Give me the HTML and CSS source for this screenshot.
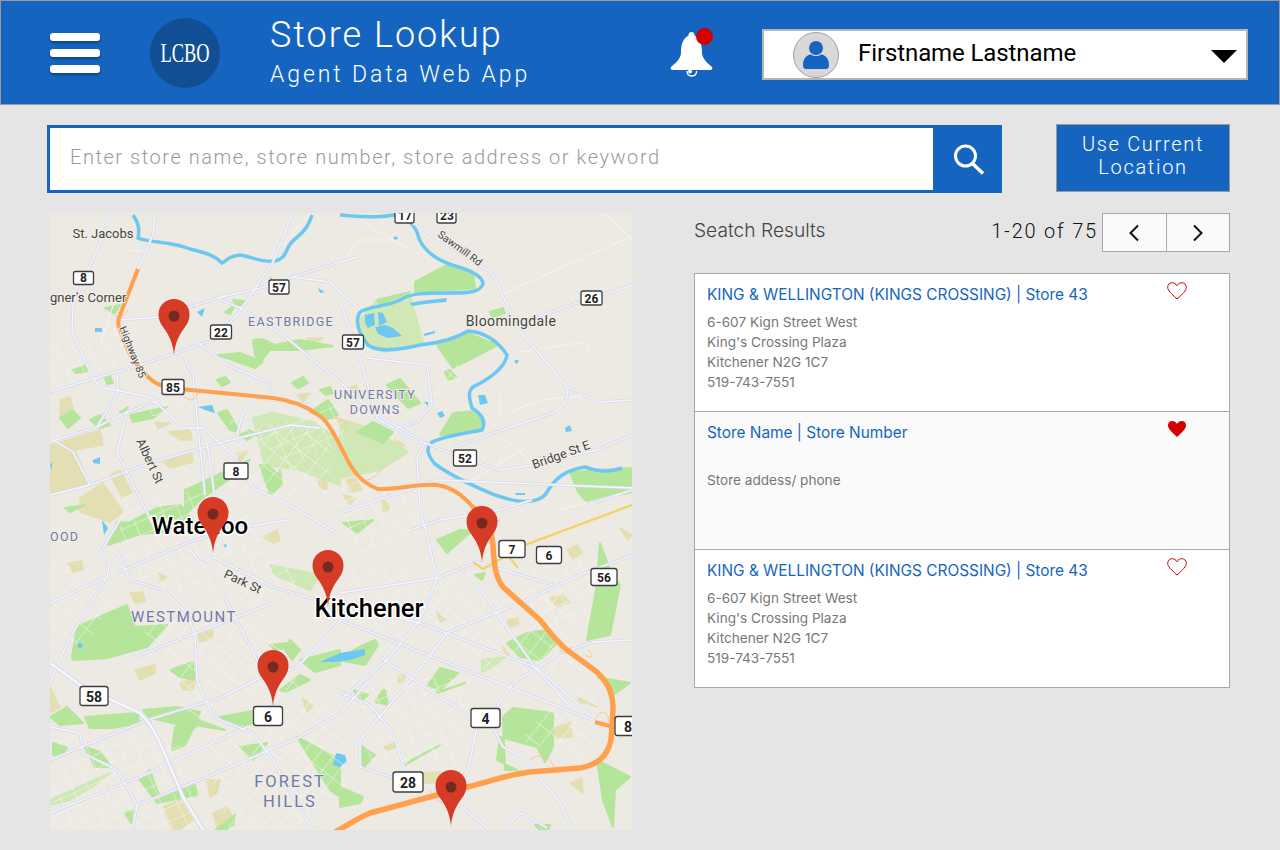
FILE: index.html
```html
<!DOCTYPE html>
<html lang="en">
<head>
    <meta charset="UTF-8">
    <meta name="viewport" content="width=device-width, initial-scale=1.0">
    <title>Store Lookup</title>
    <link rel="stylesheet" href="styles.css">
</head>
<body>
    <header class="app-header">
        <div class="hamburger">
            <span></span>
            <span></span>
            <span></span>
        </div>
        <svg class="logo" width="70" height="70" viewBox="0 0 70 70">
            <circle cx="35" cy="35" r="35" fill="#114f95"/>
            <text class="logo-text" x="35" y="44" text-anchor="middle" textLength="49" lengthAdjust="spacingAndGlyphs">LCBO</text>
        </svg>
        <div class="app-title">
            <h1>Store Lookup</h1>
            <p>Agent Data Web App</p>
        </div>
        <div class="bell">
            <svg width="44" height="52" viewBox="0 0 44 52">
                <path d="M21.500 6c-2 0-3 1.500-3 3.500C13 12 11 19 11 26c0 6-4 10-9.500 14.500-1.500 1.500-1 3.500 1.500 3.500h37c2.500 0 3-2 1.500-3.500C36 36 32 32 32 26c0-7-2-14-7.500-16.500C24.500 7.500 23.500 6 21.500 6z" fill="#fff"/>
                <path d="M17 45c0 3 2 5 4.800 5s4.800-2 4.800-5" fill="none" stroke="#fff" stroke-width="1.400"/>
                <circle cx="20" cy="45.500" r="2" fill="#fff"/>
            </svg>
            <span class="bell-dot"></span>
        </div>
        <div class="user-box">
            <div class="avatar">
                <svg width="28" height="30" viewBox="0 0 28 30">
                    <circle cx="14" cy="8" r="7" fill="#1565c0"/>
                    <path d="M1 25c0-7 4-10 8-10.500 3 2 7 2 10 0 4 .5 8 3.500 8 10.500 0 2.500-1 4-3 4H4c-2 0-3-1.500-3-4z" fill="#1565c0"/>
                </svg>
            </div>
            <span class="user-name">Firstname Lastname</span>
            <span class="caret"></span>
        </div>
    </header>

    <main class="page">
        <div class="search-row">
            <div class="search-box">
                <input type="text" class="search-input" placeholder="Enter store name, store number, store address or keyword">
                <button class="search-btn">
                    <svg width="32" height="31" viewBox="0 0 32 31">
                        <circle cx="12.500" cy="12" r="10" fill="none" stroke="#fff" stroke-width="3"/>
                        <path d="M19.500 19.500l10.500 10" stroke="#fff" stroke-width="3.500" fill="none"/>
                    </svg>
                </button>
            </div>
            <button class="location-btn">Use Current Location</button>
        </div>

        <div class="content-row">
            <div class="map">
                <svg width="582" height="617" viewBox="50 213 582 617">
                    <defs>
                        <pattern id="streets" width="15" height="13" patternUnits="userSpaceOnUse" patternTransform="rotate(-24)">
                            <path d="M0 0H15M0 0V13" stroke="#f8f6f2" stroke-width="1" fill="none"/>
                        </pattern>
                        <pattern id="streets2" width="13" height="17" patternUnits="userSpaceOnUse" patternTransform="rotate(38)">
                            <path d="M0 0H13M0 0V17" stroke="#f8f6f2" stroke-width="1" fill="none"/>
                        </pattern>
                        <g id="pin">
                            <path d="M0 0C-1-12-5-20-11-28-14-32-15.500-36-15.500-40.500A15.500 15.500 0 0 1 15.500-40.500C15.500-36 14-32 11-28 5-20 1-12 0 0z" fill="#d63b25"/>
                            <circle cx="0" cy="-39" r="5.500" fill="#76291f"/>
                        </g>
                        <g id="roads">
                            <path d="M154 215C156 235 148 245 138 269"/>
                            <path d="M118 320L160 317 217 298 273 285 293 277 340 262 358 257"/>
                            <path d="M50 392L130 368 173 354 213 340 237 315 273 262 292 215"/>
                            <path d="M183 355L193 375 197 418 205 495"/>
                            <path d="M207 443L215 498"/>
                            <path d="M217 298L240 308 283 335 340 382 373 412 423 442 450 453 500 470 533 465 597 450 632 435"/>
                            <path d="M410 221L490 272 497 282 517 328 563 382C570 392 570 403 553 413L453 447"/>
                            <path d="M567 387L600 402 632 400"/>
                            <path d="M513 325L580 302 632 285"/>
                            <path d="M425 443L417 458 420 505 423 520 437 578 420 620 387 660 340 700"/>
                            <path d="M420 443L377 418 360 358 340 302"/>
                            <path d="M427 365L432 405 417 422 397 428"/>
                            <path d="M367 358L427 365"/>
                            <path d="M50 495L90 485 150 463 223 442 290 425 320 428"/>
                            <path d="M50 438L73 452 90 485"/>
                            <path d="M73 305L72 332 93 378 100 387 150 397 183 428 203 428 233 455 253 488 280 500 340 535"/>
                            <path d="M127 412L117 452 140 498 153 525"/>
                            <path d="M50 442L97 427 127 412 160 400"/>
                            <path d="M117 375L118 392 97 427"/>
                            <path d="M112 215L73 305"/>
                            <path d="M195 340L227 365 267 382 273 392"/>
                            <path d="M293 277L330 282 360 310"/>
                            <path d="M243 412L257 398 310 405"/>
                            <path d="M237 435L243 412"/>
                            <path d="M50 603L107 577 110 563 100 553 120 520"/>
                            <path d="M117 552L130 580 163 590 187 613 195 635 197 680 213 717 253 733 273 760 293 797 313 830"/>
                            <path d="M50 683L70 637 107 577"/>
                            <path d="M50 760L147 720 220 698 260 678 297 667 333 630 340 620"/>
                            <path d="M50 813L140 777 247 727"/>
                            <path d="M137 805L207 777 300 737 340 713 370 680"/>
                            <path d="M50 727L80 733 83 753 117 770 137 805 133 830"/>
                            <path d="M135 657L273 603"/>
                            <path d="M203 563L213 557 273 587 317 600 340 620 473 673 593 720"/>
                            <path d="M345 605L420 623 537 668 590 715"/>
                            <path d="M225 598L257 660 270 680"/>
                            <path d="M117 573L187 543 227 530 287 520"/>
                            <path d="M190 550L203 565"/>
                            <path d="M340 593L437 578 477 562 553 585"/>
                            <path d="M527 600L447 633 413 677 360 740"/>
                            <path d="M477 585L537 670 573 710"/>
                            <path d="M380 657L470 717"/>
                            <path d="M497 707L513 683 560 653 593 642 632 640"/>
                            <path d="M477 727L468 770 458 783"/>
                            <path d="M493 728L503 747 523 757 560 803 573 830"/>
                            <path d="M360 740L360 767 393 778"/>
                            <path d="M340 692L370 705 393 733 407 777"/>
                            <path d="M457 803L487 828"/>
                            <path d="M503 828L522 813 547 828"/>
                            <path d="M527 600L580 575 632 555"/>
                            <path d="M340 513L437 480 632 488"/>
                            <path d="M587 505L632 490"/>
                            <path d="M410 530L440 520 500 510 532 500"/>
                        </g>
                    </defs>

                    <rect x="50" y="213" width="582" height="617" fill="#ede9e3"/>

                    <!-- tan areas -->
                    <g class="tan">
                        <path d="M50 445L100 430 103 445 75 450 90 485 50 495z"/>
                        <path d="M80 498L103 483 123 512 110 522 80 512z"/>
                        <path d="M110 475L120 470 132 492 122 497z"/>
                        <path d="M60 400L70 397 74 412 60 417z"/>
                        <path d="M168 432L190 430 192 440 180 440z"/>
                        <path d="M155 422L170 423 158 429z"/>
                        <path d="M163 462L192 453 193 462 170 468z"/>
                        <path d="M237 453L248 451 240 462z"/>
                        <path d="M280 442L303 444 293 449z"/>
                        <path d="M297 395L310 393 303 402z"/>
                        <path d="M307 338L323 338 310 345z"/>
                        <path d="M318 478L327 478 327 490 320 488z"/>
                        <path d="M135 670L155 665 155 673 140 680z"/>
                        <path d="M180 683L195 678 193 690 183 690z"/>
                        <path d="M198 633L213 630 213 638 200 642z"/>
                        <path d="M263 537L277 530 280 540 273 543z"/>
                        <path d="M130 593L143 592 145 601 135 603z"/>
                        <path d="M68 563L82 561 83 570 73 572z"/>
                        <path d="M158 573L167 577 160 582z"/>
                        <path d="M163 807L180 800 193 820 180 830 172 830z"/>
                        <path d="M213 813L227 807 233 817 217 827z"/>
                        <path d="M207 780L220 780 217 793 210 797z"/>
                        <path d="M302 698L313 706 307 712z"/>
                        <path d="M50 687L60 707 50 713z"/>
                        <path d="M550 598L562 595 570 602 557 607z"/>
                        <path d="M567 550L577 545 582 553 573 559z"/>
                        <path d="M507 620L518 618 520 625 510 627z"/>
                        <path d="M550 730L570 722 572 737 557 738z"/>
                        <path d="M570 783L582 778 583 793z"/>
                        <path d="M383 747L397 742 397 747 387 750z"/>
                        <path d="M423 773L440 772 437 783 423 783z"/>
                        <path d="M577 697L597 707 580 702z"/>
                        <path d="M398 675L405 675 403 683 398 682z"/>
                        <path d="M437 612L445 620 440 622z"/>
                        <path d="M502 645L512 660 505 655z"/>
                        <path d="M620 528L632 535 628 540z"/>
                        <path d="M345 390L356 385 360 392 350 397z"/>
                        <path d="M346 480L355 478 362 490 350 492z"/>
                        <path d="M383 500L390 505 388 512 383 510z"/>
                        <path d="M343 495L356 498 350 505z"/>
                        <path d="M335 417L360 425 345 432z"/>
                        <path d="M395 440L405 445 398 450z"/>
                    </g>

                    <!-- light parks -->
                    <g class="park-light">
                        <path d="M360 320L377 300 410 295 423 342 385 352 365 345z"/>
                        <path d="M340 422L373 428 408 452 380 470 340 478z"/>
                        <path d="M253 418L273 413 313 422 340 440 340 485 300 470 265 465z"/>
                        <path d="M50 800L110 773 95 785 70 800 50 805z"/>
                        <path d="M270 565L320 575 310 590 275 575z"/>
                        <path d="M482 660L505 657 495 665 482 672z"/>
                    </g>

                    <!-- parks -->
                    <g class="park">
                        <path d="M415 282L447 265 473 273 475 288 415 293z"/>
                        <path d="M377 300L410 292 395 298 380 305z"/>
                        <path d="M437 345L467 333 498 345 453 368z"/>
                        <path d="M440 435L453 413 477 411 485 422 478 432z"/>
                        <path d="M490 312L503 308 505 313 492 317z"/>
                        <path d="M570 472L632 468 632 492 587 502 578 492z"/>
                        <path d="M357 432L373 422 393 432 383 443z"/>
                        <path d="M387 385L400 379 420 403 408 408z"/>
                        <path d="M445 372L450 370 456 377 448 380z"/>
                        <path d="M253 340L262 339 275 345 300 340 333 346 300 350 270 350 260 362 255 355z"/>
                        <path d="M218 355L240 353 263 362 255 368z"/>
                        <path d="M217 380L225 377 230 382 222 386z"/>
                        <path d="M292 383L303 377 308 383 298 388z"/>
                        <path d="M320 390L330 387 333 393 326 395z"/>
                        <path d="M247 301L233 300 238 307z"/>
                        <path d="M225 312L236 304 230 314z"/>
                        <path d="M105 308L120 305 115 313z"/>
                        <path d="M73 370L85 366 87 371 76 373z"/>
                        <path d="M105 378L110 376 113 383 107 384z"/>
                        <path d="M130 415L167 407 153 418 133 422z"/>
                        <path d="M60 418L72 410 80 418 68 428z"/>
                        <path d="M90 420L100 415 110 425 100 428z"/>
                        <path d="M218 413L227 410 240 432 230 430z"/>
                        <path d="M240 435L250 430 257 435 247 440z"/>
                        <path d="M120 412L128 407 122 415z"/>
                        <path d="M260 465L267 465 280 475 280 470 282 485 270 495z"/>
                        <path d="M310 412L328 400 338 415 325 420z"/>
                        <path d="M72 657L77 627 127 605 135 627 167 625 147 647 107 658 73 660z"/>
                        <path d="M108 545L117 523 130 522 157 508 180 505 197 525 175 530 137 535z"/>
                        <path d="M65 508L85 505 70 512z"/>
                        <path d="M185 490L250 460 245 468 200 500 185 515z"/>
                        <path d="M170 670L193 662 195 680 180 677z"/>
                        <path d="M50 717L67 707 83 723 60 725z"/>
                        <path d="M85 717L137 713 140 723 113 728 90 728z"/>
                        <path d="M143 710L177 707 200 712 195 728 150 718z"/>
                        <path d="M175 727L190 717 225 730 195 725 185 745 172 750z"/>
                        <path d="M220 717L257 710 253 723 237 727z"/>
                        <path d="M240 747L267 743 253 760z"/>
                        <path d="M140 780L157 803 197 795 195 785 160 798 150 770z"/>
                        <path d="M53 743L67 748 60 757 53 755z"/>
                        <path d="M85 747L100 752 112 767 95 767z"/>
                        <path d="M125 813L133 810 131 823z"/>
                        <path d="M215 830L235 815 233 825 225 830z"/>
                        <path d="M270 645L288 643 292 647 275 650z"/>
                        <path d="M280 690L300 675 310 680 285 692z"/>
                        <path d="M285 650L290 640 300 650 292 660z"/>
                        <path d="M300 660L340 650 340 665 315 672z"/>
                        <path d="M297 737L340 760 340 797 330 790z"/>
                        <path d="M338 660L357 648 375 640 378 645 365 665z"/>
                        <path d="M503 717L513 708 553 713 553 747 545 762 537 747 500 737 497 760 517 770 505 770z"/>
                        <path d="M600 543L610 570 620 585 610 635 587 640 596 590z"/>
                        <path d="M507 643L527 633 547 630 557 643 540 660 520 657z"/>
                        <path d="M598 677L630 683 610 697 605 680z"/>
                        <path d="M597 760L630 777 615 790 613 827 603 800z"/>
                        <path d="M437 540L460 530 473 530 447 553z"/>
                        <path d="M475 575L485 573 482 580z"/>
                        <path d="M428 685L440 668 458 673 440 690z"/>
                        <path d="M435 693L465 683 440 692z"/>
                        <path d="M353 690L368 695 362 700z"/>
                        <path d="M383 690L385 690 388 705 375 702z"/>
                        <path d="M360 745L375 755 363 768z"/>
                        <path d="M340 787L363 797 360 803 340 807z"/>
                        <path d="M343 523L373 520 357 533z"/>
                        <path d="M405 765L440 745 412 760z"/>
                        <path d="M535 825L550 825 548 830 540 830z"/>
                    </g>

                    <!-- water -->
                    <g class="river">
                        <path d="M133 215C138 222 140 228 138 238 150 243 170 241 190 249 205 253 215 255 222 263 228 260 228 256 240 255 253 257 262 263 275 261 287 258 285 250 291 243 298 235 307 232 312 215"/>
                        <path d="M340 215C355 216 373 219 393 215 405 215 412 222 417 232 420 247 432 258 452 265 470 270 483 276 483 284 480 292 470 293 450 293 425 293 410 293 400 300 385 307 370 306 360 312 355 320 358 332 368 345 378 352 395 351 420 345 440 343 458 337 468 331 485 332 497 340 507 355 505 368 490 378 477 385 468 388 468 395 472 408 485 416 485 424 482 430 470 432 445 436 432 442 425 448 428 456 435 464 450 475 473 486 495 495 515 502 535 505 545 495 555 478 565 470 585 467 605 474 615 470 622 468 632 465"/>
                    </g>
                    <g class="water">
                        <path d="M365 315L374 313 375 325 368 328 365 323z"/>
                        <path d="M378 312L383 313 387 322 379 326z"/>
                        <path d="M375 327L385 325 393 328 402 336 388 338 378 334z"/>
                        <path d="M410 303L420 301 447 298 446 302 425 304 412 306z"/>
                        <path d="M423 334L435 331 435 333 425 336z"/>
                        <path d="M478 395L485 395 488 403 480 405z"/>
                        <path d="M515 360A2 2 0 1 0 518 360z"/>
                        <path d="M565 428L570 425 572 431 566 432z"/>
                        <path d="M515 493L525 493 525 495 516 495z"/>
                        <path d="M437 413L442 411 445 416 440 418z"/>
                        <path d="M424 402L428 402 428 406z"/>
                        <path d="M395 236L398 238 397 241 393 239z"/>
                        <path d="M95 328L102 328 102 332 95 332z"/>
                        <path d="M198 407L212 405 215 413 205 410z"/>
                        <path d="M93 460L100 457 100 464 93 463z"/>
                        <path d="M50 465L52 462 52 470z"/>
                        <path d="M102 520L108 528 104 535z"/>
                        <path d="M223 545L227 544 226 548z"/>
                        <path d="M80 643A2.500 2.500 0 1 0 80.100 643z"/>
                        <path d="M320 662L340 653 365 649 365 655 350 660 335 662z"/>
                        <path d="M333 765L336 753 345 755 347 762 340 767z"/>
                        <path d="M270 276L274 282 272 285z"/>
                        <path d="M318 288L325 292 320 293z"/>
                        <path d="M197 312L205 308 202 317z"/>
                    </g>

                    <!-- textured neighbourhoods -->
                    <g>
                        <path fill="url(#streets)" d="M50 345L118 325 130 365 50 395z"/>
                        <path fill="url(#streets)" d="M130 400L190 395 190 425 130 410z"/>
                        <path fill="url(#streets2)" d="M230 420L330 430 330 500 230 500z"/>
                        <path fill="url(#streets)" d="M120 500L200 490 260 520 300 590 190 600 120 570z"/>
                        <path fill="url(#streets)" d="M340 480L420 490 430 530 350 560z"/>
                        <path fill="url(#streets2)" d="M50 560L120 585 90 640 50 650z"/>
                        <path fill="url(#streets2)" d="M140 620L260 590 300 690 190 720z"/>
                        <path fill="url(#streets)" d="M60 730L180 740 200 830 50 830z"/>
                        <path fill="url(#streets2)" d="M200 740L340 690 350 780 300 830 230 830z"/>
                        <path fill="url(#streets)" d="M345 565L480 570 400 640 350 620z"/>
                        <path fill="url(#streets2)" d="M400 590L560 590 590 680 480 670z"/>
                        <path fill="url(#streets)" d="M500 560L600 560 590 620 540 630z"/>
                        <path fill="url(#streets)" d="M345 670L470 680 460 770 370 760z"/>
                        <path fill="url(#streets2)" d="M560 690L600 690 590 760 520 740z"/>
                        <path fill="url(#streets)" d="M250 430L340 400 345 440 290 470z"/>
                        <path fill="url(#streets2)" d="M425 360L470 365 440 410 420 380z"/>
                        <path fill="url(#streets)" d="M480 450L530 455 520 480 490 470z"/>
                    </g>

                    <!-- minor roads -->
                    <g class="road-minor">
                        <path d="M500 295L632 236"/>
                        <path d="M520 352L585 342 590 355"/>
                        <path d="M510 412L540 400 590 395"/>
                        <path d="M500 395V415"/>
                        <path d="M605 213L632 240"/>
                        <path d="M130 250L150 252"/>
                        <path d="M115 300L100 345"/>
                        <path d="M270 258L310 215"/>
                        <path d="M340 265L360 240 400 240"/>
                        <path d="M560 510L632 490"/>
                        <path d="M360 220L410 250"/>
                        <path d="M472 480L530 445"/>
                        <path d="M505 440L540 470"/>
                    </g>

                    <!-- main roads -->
                    <use href="#roads" class="road-casing"/>
                    <use href="#roads" class="road-fill"/>
                    <path class="road-wide-casing" d="M50 663L83 687 140 713C150 722 158 738 163 750L183 797 203 830"/>
                    <path class="road-wide-fill" d="M50 663L83 687 140 713C150 722 158 738 163 750L183 797 203 830"/>

                    <!-- yellow road -->
                    <path class="road-yellow" d="M473 562L483 569 525 545 632 505"/>
                    <path class="road-yellow" d="M510 558L518 568"/>

                    <!-- highway -->
                    <path class="highway-ramp" d="M110 310C115 320 125 318 128 310M180 392C190 405 195 400 200 390M487 525L500 520M560 642C558 655 568 655 572 648M585 655C592 660 595 655 588 650M595 720C603 705 610 715 608 722M530 760C545 750 550 760 555 768M430 790C440 810 450 800 455 808M325 420C335 415 350 420 345 432M358 470C355 485 375 482 380 470"/>
                    <path class="highway-thin" d="M138 269L120 315C117 322 118 326 120 330 126 345 130 358 140 368 148 378 155 385 170 388L273 398C290 400 305 405 320 416 330 424 336 438 345 455 352 470 360 482 378 489 395 490 420 483 437 485 452 487 462 495 473 507"/>
                    <path class="highway" d="M473 507C485 520 492 530 493 545 494 560 494 575 503 587L540 620C550 632 555 640 567 650L597 672C610 685 613 695 613 710L611 740C608 755 598 765 580 768L530 772C505 775 490 782 467 787L370 813C358 818 348 825 335 832"/>
                    <path class="highway-thin" d="M595 722L610 726"/>

                    <!-- labels -->
                    <g class="map-label">
                        <text x="103" y="238" text-anchor="middle">St. Jacobs</text>
                        <text x="50" y="302">gner's Corner</text>
                        <text class="small" transform="translate(119 328) rotate(68)">Highway 85</text>
                        <text class="med" transform="translate(136 441) rotate(65)">Albert St</text>
                        <text class="small" transform="translate(437 236) rotate(36)">Sawmill Rd</text>
                        <text class="large" x="511" y="326" text-anchor="middle">Bloomingdale</text>
                        <text class="med" transform="translate(534 469) rotate(-20)">Bridge St E</text>
                        <text class="med" transform="translate(223 577) rotate(25)">Park St</text>
                    </g>
                    <g class="map-area">
                        <text x="291" y="326" text-anchor="middle">EASTBRIDGE</text>
                        <text x="375" y="399" text-anchor="middle">UNIVERSITY</text>
                        <text x="375" y="414" text-anchor="middle">DOWNS</text>
                        <text x="50" y="541">OOD</text>
                        <text class="big" x="184" y="622" text-anchor="middle">WESTMOUNT</text>
                        <text class="bigger" x="290" y="787" text-anchor="middle">FOREST</text>
                        <text class="bigger" x="290" y="807" text-anchor="middle">HILLS</text>
                    </g>
                    <g class="map-city">
                        <text x="200" y="534" text-anchor="middle">Waterloo</text>
                        <text class="kitchener" x="369" y="617" text-anchor="middle">Kitchener</text>
                    </g>

                    <!-- shields -->
                    <g class="shield">
                        <rect x="73.500" y="271.500" width="20" height="13" rx="2"/><text x="83.500" y="282">8</text>
                        <rect x="269" y="280" width="20" height="14" rx="2"/><text x="279" y="291.500">57</text>
                        <rect x="210.500" y="325" width="21" height="14" rx="2"/><text x="221" y="336.500">22</text>
                        <rect x="162" y="379.500" width="22" height="15" rx="2"/><text x="173" y="391.500">85</text>
                        <rect x="224" y="463" width="24" height="16" rx="2"/><text x="236" y="475.500">8</text>
                        <rect x="395" y="205" width="19" height="18" rx="2"/><text x="405" y="220">17</text>
                        <rect x="437" y="205" width="19" height="18" rx="2"/><text x="447" y="220">23</text>
                        <rect x="581" y="291" width="21" height="14" rx="2"/><text x="591.500" y="302.500">26</text>
                        <rect x="342.500" y="335" width="21" height="14" rx="2"/><text x="353" y="346.500">57</text>
                        <rect x="453.500" y="450" width="23" height="16" rx="2"/><text x="465" y="462.500">52</text>
                        <rect x="80" y="686.500" width="28" height="19" rx="2.500"/><text class="lg" x="94" y="701.500">58</text>
                        <rect x="253.500" y="706.500" width="29" height="19" rx="2.500"/><text class="lg" x="268" y="721.500">6</text>
                        <rect x="499" y="540.500" width="26" height="17" rx="2.500"/><text x="512" y="554">7</text>
                        <rect x="536.500" y="546.500" width="25" height="17" rx="2.500"/><text x="549" y="560">6</text>
                        <rect x="591" y="568.500" width="26" height="17" rx="2.500"/><text x="604" y="582">56</text>
                        <rect x="471" y="708.500" width="29" height="19" rx="2.500"/><text class="lg" x="485.500" y="723.500">4</text>
                        <rect x="393" y="772" width="30" height="20" rx="2.500"/><text class="lg" x="408" y="787.500">28</text>
                        <rect x="615" y="716.500" width="30" height="19" rx="2.500"/><text class="lg" x="628" y="731.500">8</text>
                    </g>

                    <!-- pins -->
                    <use href="#pin" x="174" y="355"/>
                    <use href="#pin" x="213" y="553"/>
                    <use href="#pin" x="328" y="606"/>
                    <use href="#pin" x="482" y="562"/>
                    <use href="#pin" x="273" y="706"/>
                    <use href="#pin" x="451" y="826"/>
                </svg>
            </div>

            <section class="results">
                <div class="results-head">
                    <h2>Seatch Results</h2>
                    <span class="count">1-20 of 75</span>
                    <div class="pager">
                        <button>
                            <svg width="12" height="18" viewBox="0 0 12 18"><path d="M10 1.500L2.500 9l7.500 7.500" fill="none" stroke="#111" stroke-width="2"/></svg>
                        </button>
                        <button>
                            <svg width="12" height="18" viewBox="0 0 12 18"><path d="M2 1.500L9.500 9 2 16.500" fill="none" stroke="#111" stroke-width="2"/></svg>
                        </button>
                    </div>
                </div>

                <div class="result-list">
                    <article class="result">
                        <svg class="heart" width="20" height="18" viewBox="0 0 20 18"><path d="M10 17C4 11.500 .7 8.500 .7 5.200 .7 2.600 2.700 .7 5.200 .7 7.200 .7 9 1.800 10 3.800 11 1.800 12.800 .7 14.800 .7 17.300 .7 19.300 2.600 19.300 5.200 19.300 8.500 16 11.500 10 17z" fill="none" stroke="#d40000" stroke-width="1"/></svg>
                        <h3>KING &amp; WELLINGTON (KINGS CROSSING) | Store 43</h3>
                        <p>6-607 Kign Street West<br>King's Crossing Plaza<br>Kitchener N2G 1C7<br>519-743-7551</p>
                    </article>
                    <article class="result result-active">
                        <svg class="heart" width="20" height="18" viewBox="0 0 20 18"><path d="M10 17C4 11.500 1 8.500 1 5.200 1 2.600 2.900 1 5.200 1 7.200 1 9 2 10 4 11 2 12.800 1 14.800 1 17.100 1 19 2.600 19 5.200 19 8.500 16 11.500 10 17z" fill="#d40000"/></svg>
                        <h3>Store Name | Store Number</h3>
                        <p class="placeholder-line">Store addess/ phone</p>
                    </article>
                    <article class="result">
                        <svg class="heart" width="20" height="18" viewBox="0 0 20 18"><path d="M10 17C4 11.500 .7 8.500 .7 5.200 .7 2.600 2.700 .7 5.200 .7 7.200 .7 9 1.800 10 3.800 11 1.800 12.800 .7 14.800 .7 17.300 .7 19.300 2.600 19.300 5.200 19.300 8.500 16 11.500 10 17z" fill="none" stroke="#d40000" stroke-width="1"/></svg>
                        <h3>KING &amp; WELLINGTON (KINGS CROSSING) | Store 43</h3>
                        <p>6-607 Kign Street West<br>King's Crossing Plaza<br>Kitchener N2G 1C7<br>519-743-7551</p>
                    </article>
                </div>
            </section>
        </div>
    </main>
</body>
</html>
```

FILE: styles.css
```css
* {
    box-sizing: border-box;
}
body {
    margin: 0;
    background: #e5e5e5;
    font-family: Roboto, "Liberation Sans", sans-serif;
    overflow: hidden;
}

/* header */
.app-header {
    display: flex;
    align-items: flex-start;
    height: 105px;
    padding-left: 50px;
    background: #1565c0;
    border: 1px solid #999;
}
.hamburger {
    width: 50px;
    margin-top: 32px;
    margin-left: -1px;
}
.hamburger span {
    display: block;
    height: 8px;
    margin-bottom: 8px;
    background: #fff;
    border-radius: 3px;
    box-shadow: 0 2px 3px rgba(0, 0, 0, 0.35);
}
.logo {
    margin-top: 17px;
    margin-left: 50px;
    flex: none;
}
.logo-text {
    font-family: "Liberation Serif", serif;
    font-size: 27px;
    fill: #fff;
}
.app-title {
    margin-left: 50px;
    margin-top: 13px;
    color: #fff;
    width: 400px;
}
.app-title h1 {
    margin: 0;
    font-size: 36px;
    font-weight: 300;
    line-height: 42px;
    letter-spacing: 2px;
}
.app-title p {
    margin: 5px 0 0;
    font-size: 23px;
    font-weight: 300;
    line-height: 27px;
    letter-spacing: 2.9px;
}
.bell {
    position: relative;
    width: 44px;
    height: 50px;
    margin-top: 25px;
}
.bell-dot {
    position: absolute;
    top: 2px;
    left: 26px;
    width: 17px;
    height: 17px;
    background: #d40000;
    border-radius: 50%;
}
.user-box {
    display: flex;
    align-items: center;
    width: 486px;
    height: 51px;
    margin-top: 28px;
    margin-left: 48px;
    padding-left: 29px;
    background: #fff;
    border: 2px solid #b5b5b5;
}
.avatar {
    display: flex;
    align-items: center;
    justify-content: center;
    width: 46px;
    height: 46px;
    background: #d8d8d8;
    border: 1px solid #a0a0a0;
    border-radius: 50%;
}
.user-name {
    margin-left: 19px;
    padding-bottom: 4px;
    font-size: 24px;
    letter-spacing: -0.1px;
    color: #000;
    flex: 1;
}
.caret {
    width: 0;
    height: 0;
    margin-right: 9px;
    border-left: 13px solid transparent;
    border-right: 13px solid transparent;
    border-top: 13px solid #000;
    margin-top: 3px;
}

/* page */
.page {
    padding: 19px 50px 20px;
}
.search-row {
    display: flex;
    align-items: flex-start;
    margin-left: -3px;
}
.search-box {
    display: flex;
    width: 955px;
    height: 68px;
    margin-top: 1px;
    border: 3px solid #1565c0;
    background: #fff;
}
.search-input {
    flex: 1;
    border: 0;
    outline: 0;
    padding: 0 20px 4px;
    font-family: Roboto, sans-serif;
    font-size: 20px;
    font-weight: 300;
    letter-spacing: 1.550px;
    background: #fff;
}
.search-input::placeholder {
    color: #9b9b9b;
    opacity: 1;
}
.search-btn {
    width: 66px;
    padding: 0 0 0 5px;
    border: 0;
    background: #1565c0;
    display: flex;
    align-items: center;
    justify-content: center;
}
.location-btn {
    width: 174px;
    height: 68px;
    margin-left: 54px;
    padding: 0 20px 4px;
    background: #1565c0;
    border: 1px solid #999;
    color: #fff;
    font-family: Roboto, sans-serif;
    font-size: 20px;
    font-weight: 300;
    line-height: 23px;
    letter-spacing: 1.7px;
}
.content-row {
    display: flex;
    margin-top: 20px;
}
.map {
    width: 582px;
    height: 617px;
    flex: none;
    overflow: hidden;
}
.map svg {
    display: block;
}
.results {
    width: 536px;
    margin-left: 62px;
}
.results-head {
    display: flex;
    align-items: center;
    height: 39px;
}
.results-head h2 {
    flex: 1;
    margin: 0 0 5px;
    font-family: Inter, Roboto, sans-serif;
    font-size: 19.200px;
    font-weight: 300;
    color: #444;
}
.count {
    font-size: 20px;
    font-weight: 300;
    letter-spacing: 1.8px;
    color: #111;
    margin: 0 4px 3px 0;
}
.pager {
    display: flex;
    width: 128px;
    height: 39px;
    border: 1px solid #a8a8a8;
    background: #fafafa;
}
.pager button {
    flex: 1;
    padding: 0;
    border: 0;
    background: transparent;
    display: flex;
    align-items: center;
    justify-content: center;
}
.pager button + button {
    border-left: 1px solid #a8a8a8;
}
.result-list {
    margin-top: 21px;
    border: 1px solid #a8a8a8;
    background: #fff;
}
.result {
    position: relative;
    height: 138px;
    padding: 11px 12px 0;
    border-top: 1px solid #a8a8a8;
}
.result:first-child {
    border-top: 0;
    height: 137px;
    padding-top: 11px;
}
.result-active {
    background: #fafafa;
}
.result h3 {
    margin: 0;
    font-family: Inter, Roboto, sans-serif;
    font-size: 15.400px;
    font-weight: 400;
    line-height: 20px;
    color: #1565c0;
}
.result p {
    margin: 7px 0 0;
    font-family: Inter, Roboto, sans-serif;
    font-size: 13.600px;
    line-height: 20px;
    color: #777;
}
.result .placeholder-line {
    margin-top: 27px;
}
.heart {
    position: absolute;
    top: 8px;
    left: 472px;
}

/* map */
.tan path {
    fill: #e4dfb3;
    stroke: #e4dfb3;
    stroke-width: 1.500;
    stroke-linejoin: round;
}
.park path {
    fill: #b5e59b;
    stroke: #b5e59b;
    stroke-width: 2;
    stroke-linejoin: round;
}
.park-light path {
    fill: #cfe8b6;
    stroke: #cfe8b6;
    stroke-width: 2;
    stroke-linejoin: round;
}
.water path {
    fill: #6cc8f0;
}
.river path {
    fill: none;
    stroke: #6cc8f0;
    stroke-width: 3.500;
}
.road-casing {
    fill: none;
    stroke: #d6daec;
    stroke-width: 3;
    stroke-linejoin: round;
}
.road-fill {
    fill: none;
    stroke: #f7f7fb;
    stroke-width: 1.300;
    stroke-linejoin: round;
}
.road-wide-casing {
    fill: none;
    stroke: #d6daec;
    stroke-width: 4.500;
    stroke-linejoin: round;
}
.road-wide-fill {
    fill: none;
    stroke: #f7f7fb;
    stroke-width: 2.500;
    stroke-linejoin: round;
}
.road-minor path {
    fill: none;
    stroke: #f7f5f2;
    stroke-width: 1;
}
.road-yellow {
    fill: none;
    stroke: #f3d255;
    stroke-width: 2;
}
.highway {
    fill: none;
    stroke: #ffa04d;
    stroke-width: 5.500;
    stroke-linejoin: round;
}
.highway-thin {
    fill: none;
    stroke: #ffa04d;
    stroke-width: 4;
    stroke-linejoin: round;
}
.highway-ramp {
    fill: none;
    stroke: #fbc59a;
    stroke-width: 1;
}
.map-label text {
    font-family: Roboto, sans-serif;
    font-size: 13px;
    fill: #444;
    paint-order: stroke;
    stroke: #f3f0ea;
    stroke-width: 2px;
}
.map-label .small {
    font-size: 10.500px;
}
.map-label .med {
    font-size: 12.500px;
}
.map-label .large {
    font-size: 14px;
    letter-spacing: 0.4px;
}
.map-area text {
    font-family: Roboto, sans-serif;
    font-size: 12.500px;
    letter-spacing: 1.300px;
    fill: #6f7aa6;
    paint-order: stroke;
    stroke: #f0ede7;
    stroke-width: 2px;
}
.map-area .big {
    font-size: 15px;
    letter-spacing: 1.500px;
}
.map-area .bigger {
    font-size: 16.500px;
    letter-spacing: 2px;
}
.map-city text {
    font-family: Roboto, sans-serif;
    font-size: 24px;
    font-weight: 500;
    fill: #000;
    paint-order: stroke;
    stroke: #fff;
    stroke-width: 3px;
}
.map-city .kitchener {
    font-size: 25.500px;
}
.shield rect {
    fill: #fff;
    stroke: #3c3c3c;
    stroke-width: 1.300;
}
.shield text {
    font-family: Roboto, sans-serif;
    font-size: 12px;
    font-weight: 700;
    fill: #222;
    text-anchor: middle;
}
.shield .lg {
    font-size: 14px;
}
```
